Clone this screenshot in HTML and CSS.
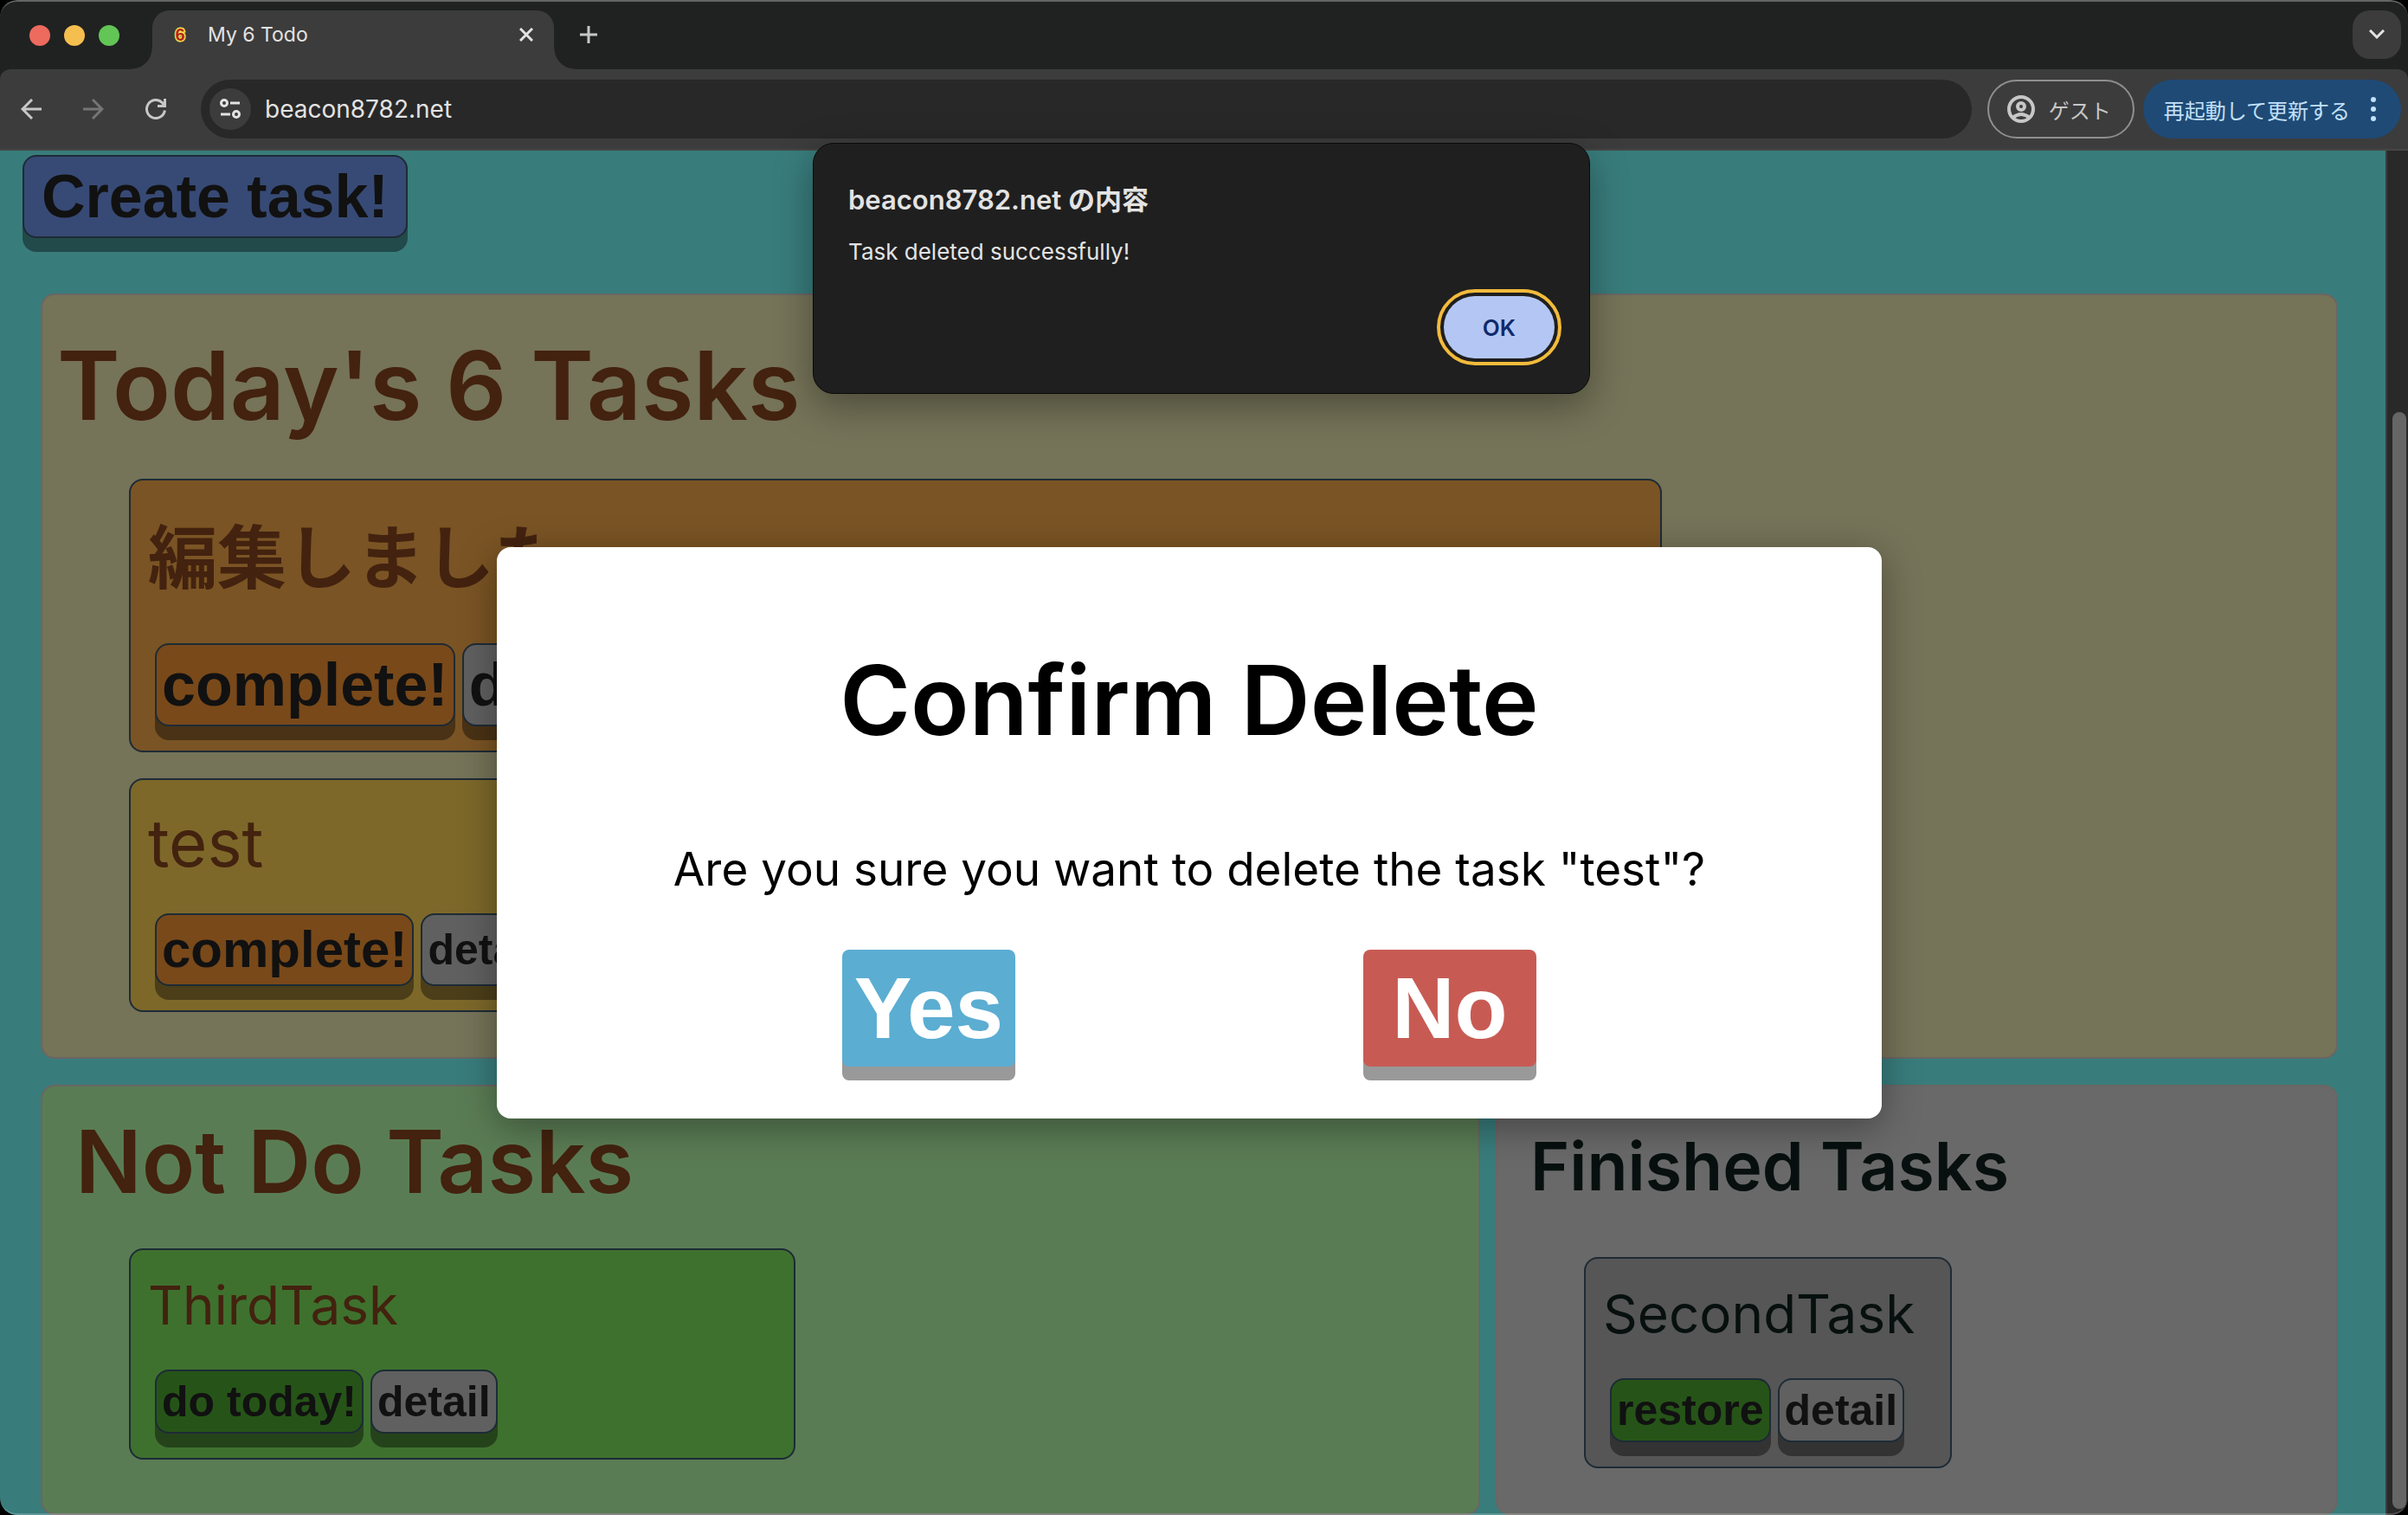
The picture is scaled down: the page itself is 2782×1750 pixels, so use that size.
FILE: index.html
```html
<!DOCTYPE html>
<html lang="ja">
<head>
<meta charset="utf-8">
<meta name="viewport" content="width=device-width, initial-scale=1">
<title>My 6 Todo</title>
<link rel="stylesheet" href="styles.css">
</head>
<body>
<div class="window">
  <header class="chrome">
    <div class="tabstrip">
      <div class="lights">
        <span class="light light-red"></span>
        <span class="light light-yellow"></span>
        <span class="light light-green"></span>
      </div>
      <div class="tab">
        <span class="favicon">6</span>
        <span class="tab-title">My 6 Todo</span>
        <button class="icon-button" aria-label="タブを閉じる">
          <svg width="16" height="16" viewBox="0 0 16 16"><path d="M1 1l14 14M15 1L1 15" fill="none" stroke="#e3e3e3" stroke-width="3"/></svg>
        </button>
      </div>
      <button class="icon-button new-tab" aria-label="新しいタブ">
        <svg width="22" height="22" viewBox="0 0 22 22"><path d="M11 1v20M1 11h20" fill="none" stroke="#c7c7c7" stroke-width="3"/></svg>
      </button>
      <button class="tab-search" aria-label="タブを検索">
        <svg width="18" height="12" viewBox="0 0 18 12"><path d="M1 1l8 8 8-8" fill="none" stroke="#e3e3e3" stroke-width="3"/></svg>
      </button>
    </div>
    <div class="toolbar">
      <button class="icon-button" aria-label="戻る">
        <svg width="24" height="24" viewBox="0 0 24 24"><path d="M24 12H2M13 1L2 12l11 11" fill="none" stroke="#c7c7c7" stroke-width="3"/></svg>
      </button>
      <button class="icon-button" aria-label="進む">
        <svg width="24" height="24" viewBox="0 0 24 24"><path d="M0 12h22M11 1l11 11-11 11" fill="none" stroke="#757575" stroke-width="3"/></svg>
      </button>
      <button class="icon-button" aria-label="再読み込み">
        <svg width="24" height="24" viewBox="0 0 24 24"><path d="M22.400 13.500A10.500 10.500 0 1 1 19.500 4.600L22 8M22.500 0v8.500H14" fill="none" stroke="#c7c7c7" stroke-width="3"/></svg>
      </button>
      <div class="address">
        <button class="site-info" aria-label="サイト情報">
          <svg width="26" height="26" viewBox="0 0 26 26" fill="none" stroke="#e3e3e3" stroke-width="3"><circle cx="6" cy="6" r="3.500"/><path d="M13 6h11M2 19h11"/><circle cx="20" cy="19" r="3.500"/></svg>
        </button>
        <input class="url" type="text" aria-label="アドレス" value="beacon8782.net">
      </div>
      <button class="guest">
        <svg width="34" height="34" viewBox="0 0 34 34" fill="none" stroke="#c7c7c7" stroke-width="4"><circle cx="17" cy="17" r="14"/><circle cx="17" cy="14" r="4"/><path d="M7 27q10-8 20 0"/></svg>
        ゲスト
      </button>
      <button class="update">
        再起動して更新する
        <svg width="8" height="30" viewBox="0 0 8 30" fill="#c2e1fb"><circle cx="4" cy="4" r="3"/><circle cx="4" cy="15" r="3"/><circle cx="4" cy="26" r="3"/></svg>
      </button>
    </div>
  </header>

  <div class="viewport">
    <main class="page">
      <button class="key key-xl key-create">Create task!</button>

      <section class="panel panel-today">
        <h1 class="panel-title title-today">Today's 6 Tasks</h1>
        <div class="cards">
          <article class="card card-first">
            <h2 class="card-title card-title-first">編集しました</h2>
            <div class="keys">
              <button class="key key-xl key-complete">complete!</button>
              <button class="key key-xl key-detail">detail</button>
            </div>
          </article>
          <article class="card card-second">
            <h2 class="card-title card-title-second">test</h2>
            <div class="keys">
              <button class="key key-l key-complete">complete!</button>
              <button class="key key-m key-detail">detail</button>
            </div>
          </article>
        </div>
      </section>

      <div class="lower">
        <section class="panel panel-not">
          <h1 class="panel-title title-not">Not Do Tasks</h1>
          <div class="cards">
            <article class="card card-not">
              <h2 class="card-title">ThirdTask</h2>
              <div class="keys">
                <button class="key key-m key-green">do today!</button>
                <button class="key key-m key-detail">detail</button>
              </div>
            </article>
          </div>
        </section>
        <section class="panel panel-finished">
          <h1 class="panel-title title-finished">Finished Tasks</h1>
          <div class="cards">
            <article class="card card-finished">
              <h2 class="card-title">SecondTask</h2>
              <div class="keys">
                <button class="key key-m key-green">restore</button>
                <button class="key key-m key-detail">detail</button>
              </div>
            </article>
          </div>
        </section>
      </div>
    </main>
    <div class="scrollbar"><div class="thumb"></div></div>

    <div class="modal-layer">
      <div class="modal" role="dialog" aria-labelledby="confirm-title">
        <h2 class="modal-title" id="confirm-title">Confirm Delete</h2>
        <p class="modal-text">Are you sure you want to delete the task "test"?</p>
        <div class="modal-actions">
          <button class="answer answer-yes">Yes</button>
          <button class="answer answer-no">No</button>
        </div>
      </div>
    </div>
  </div>

  <div class="alert-layer">
    <div class="alert" role="alertdialog" aria-labelledby="alert-title">
      <h2 class="alert-title" id="alert-title">beacon8782.net の内容</h2>
      <p class="alert-text">Task deleted successfully!</p>
      <button class="alert-ok">OK</button>
    </div>
  </div>
</div>
</body>
</html>
```
FILE: styles.css
```css
* { box-sizing: border-box; }

html { background: #000; }

body {
  margin: 0;
  font-family: Inter, "Noto Sans CJK JP", sans-serif;
}

h1, h2, p { margin: 0; }

button {
  margin: 0;
  padding: 0;
  border: 0;
  background: none;
  font: inherit;
  color: inherit;
  white-space: nowrap;
}

svg { display: block; }

.window {
  position: relative;
  display: flex;
  flex-direction: column;
  min-height: 100vh;
  border-radius: 20px;
  overflow: hidden;
}

/* light rim along the top and bottom of the window */
.window::after {
  content: "";
  position: absolute;
  inset: 0;
  border-top: 2px solid rgba(255, 255, 255, 0.3);
  border-bottom: 2px solid rgba(255, 255, 255, 0.2);
  border-radius: 20px;
  pointer-events: none;
}

/* Browser chrome */

.chrome { background: #202221; }

.tabstrip {
  display: flex;
  align-items: center;
  height: 80px;
  padding: 12px 8px 0 34px;
}

.lights {
  display: flex;
  gap: 16px;
  margin: 0 38px 10px 0;
}

.light {
  width: 24px;
  height: 24px;
  border-radius: 50%;
}

.light-red { background: #ed6a5f; }
.light-yellow { background: #f5bf4f; }
.light-green { background: #62c555; }

.tab {
  position: relative;
  display: flex;
  align-items: center;
  width: 464px;
  height: 68px;
  padding: 0 24px 12px;
  border-radius: 20px 20px 0 0;
  background: #3c3c3c;
}

.tab::before,
.tab::after {
  content: "";
  position: absolute;
  bottom: 0;
  width: 24px;
  height: 24px;
}

.tab::before {
  right: 100%;
  background: radial-gradient(circle at 0 0, transparent 23px, #3c3c3c 24px);
}

.tab::after {
  left: 100%;
  background: radial-gradient(circle at 100% 0, transparent 23px, #3c3c3c 24px);
}

.favicon {
  width: 16px;
  font: bold 20px "Liberation Sans", sans-serif;
  text-align: center;
  color: #b3261e;
  -webkit-text-stroke: 3px #f6e04b;
  paint-order: stroke fill;
}

.tab-title {
  flex: 1;
  padding-left: 24px;
  font-size: 23px;
  color: #e3e3e3;
}

.new-tab {
  margin: 0 auto 12px 29px;
}

.tab-search {
  display: grid;
  place-items: center;
  width: 56px;
  height: 56px;
  margin-bottom: 12px;
  border-radius: 20px;
  background: #3c3c3c;
}

.toolbar {
  display: flex;
  align-items: center;
  height: 94px;
  padding: 0 8px 0 24px;
  border-bottom: 2px solid #464646;
  border-radius: 12px 12px 0 0;
  background: #3c3c3c;
}

.toolbar .icon-button { margin-right: 48px; }
.toolbar .icon-button:nth-child(3) { margin-right: 40px; }

.address {
  display: flex;
  flex: 1;
  align-items: center;
  gap: 16px;
  height: 68px;
  padding: 0 10px;
  border-radius: 34px;
  background: #282828;
}

.site-info {
  display: grid;
  place-items: center;
  width: 48px;
  height: 48px;
  border-radius: 50%;
  background: #3c3c3c;
}

.url {
  flex: 1;
  min-width: 0;
  padding: 0;
  border: 0;
  outline: 0;
  background: none;
  font: 28px Inter, sans-serif;
  color: #e3e3e3;
}

.guest {
  display: flex;
  align-items: center;
  gap: 15px;
  height: 68px;
  margin: 0 10px 0 18px;
  padding: 0 25px 0 20px;
  border: 2px solid #8f8f8f;
  border-radius: 34px;
  font: 24px "Noto Sans CJK JP", sans-serif;
  color: #c7c7c7;
}

.update {
  display: flex;
  align-items: center;
  gap: 23px;
  height: 68px;
  padding: 0 28px 0 24px;
  border-radius: 34px;
  background: #1f4a75;
  font: 24px "Noto Sans CJK JP", sans-serif;
  color: #c2e1fb;
}

/* Page */

.viewport {
  position: relative;
  display: flex;
  flex: 1;
}

.page {
  display: flex;
  flex: 1;
  flex-direction: column;
  padding: 5px 55px 0 47px;
  background: #397c7c;
}

.scrollbar {
  width: 26px;
  padding: 302px 2px 7px 6px;
  border-left: 2px solid #3c3c3c;
  background: #292929;
}

.thumb {
  height: 100%;
  border-radius: 8px;
  background: #666;
}

.key {
  border: 2px solid #1d2b36;
  border-radius: 16px;
  padding: 6px;
  box-shadow: 0 16px 0 rgba(0, 0, 0, 0.4);
  font-family: "Liberation Sans", Arial, sans-serif;
  font-weight: bold;
  color: #111;
}

.key-xl { font-size: 70px; line-height: 80px; }
.key-l { font-size: 60px; line-height: 68px; }
.key-m { font-size: 50px; line-height: 58px; }

.key-create {
  align-self: flex-start;
  margin: 0 0 64px -21px;
  padding: 6px 20px;
  background: #374a75;
}

.key-complete { background: #79491a; }
.key-detail { background: #606060; }
.key-green { background: #265418; }

.panel {
  border: 2px solid #6a6664;
  border-radius: 16px;
  color: #43220f;
}

.panel-today { padding: 24px 20px 52px 17px; background: #757358; }
.panel-not { background: #5a7c54; }
.panel-finished { background: #696969; color: #07100e; }

.panel-not,
.panel-finished { padding: 22px 20px 50px 38px; }

.panel-title { font-weight: 600; }
.title-today { margin-bottom: 28px; font-size: 110px; line-height: 160px; }
.title-not { margin-bottom: 37px; font-size: 101px; line-height: 128px; }
.title-finished { margin-bottom: 35px; font-size: 77px; line-height: 140px; }

.lower {
  display: grid;
  flex: 1;
  grid-template-columns: 1663fr 973fr;
  gap: 18px;
  margin-top: 30px;
}

.cards {
  display: flex;
  flex-direction: column;
  gap: 30px;
  margin-left: 83px;
}

.lower .cards { margin-left: 62px; }

.card {
  padding: 28px 20px;
  border: 2px solid #1d2b36;
  border-radius: 16px;
}

.card-first { width: 70%; background: #7a5424; }
.card-second { width: 60%; background: #7d682a; }
.card-not { width: 50%; background: #3e712e; }
.card-finished { width: 50%; background: #565656; }

.card-title {
  margin-bottom: 38px;
  font-size: 62px;
  font-weight: 400;
  line-height: 72px;
}

.card-title-first { font-size: 80px; font-weight: 700; line-height: 122px; }
.card-title-second { font-size: 76px; line-height: 88px; }

.keys {
  display: flex;
  gap: 8px;
  padding-left: 8px;
}

/* Confirmation dialog */

.modal-layer {
  position: absolute;
  inset: 0;
  display: grid;
  place-items: center;
  padding-right: 34px;
}

.modal {
  width: 1600px;
  max-width: 100%;
  padding: 111px 40px 60px;
  border-radius: 16px;
  background: #fff;
  box-shadow: 0 10px 44px rgba(0, 0, 0, 0.35);
  text-align: center;
  color: #000;
}

.modal-title {
  font-size: 111px;
  font-weight: 600;
  line-height: 132px;
}

.modal-text {
  margin: 97px 0 61px;
  font-size: 53px;
  line-height: 64px;
}

.modal-actions {
  display: flex;
  justify-content: center;
  gap: 402px;
}

.answer {
  width: 200px;
  height: 135px;
  border-radius: 8px;
  box-shadow: 0 16px 0 #999;
  font: bold 100px "Liberation Sans", Arial, sans-serif;
  color: #fff;
}

.answer-yes { background: #5badd2; }
.answer-no { background: #c75b54; }

/* Browser alert */

.alert-layer {
  position: absolute;
  inset: 165px 6px auto 0;
  display: flex;
  justify-content: center;
}

.alert {
  display: flex;
  flex-direction: column;
  width: 898px;
  padding: 45px 40px 40px;
  border: 1px solid #0a0a0a;
  border-radius: 24px;
  background: #1f1f1f;
  box-shadow: 0 14px 44px rgba(0, 0, 0, 0.35);
  color: #e3e3e3;
}

.alert-title {
  font-size: 31px;
  font-weight: 600;
  line-height: 40px;
}

.alert-text {
  margin: 20px 0 31px;
  font-size: 26px;
  line-height: 40px;
}

.alert-ok {
  align-self: flex-end;
  width: 128px;
  height: 72px;
  border-radius: 36px;
  outline: 4px solid #f3bb3b;
  outline-offset: 4px;
  background: #b4c7f4;
  font-size: 26px;
  font-weight: 600;
  color: #0f2a6b;
}
```
